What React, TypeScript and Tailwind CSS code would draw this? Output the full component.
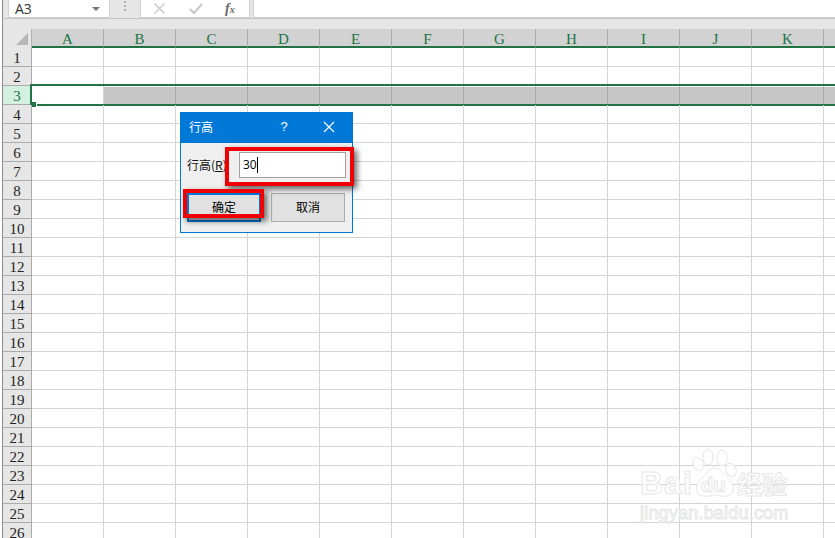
const cols = ["A","B","C","D","E","F","G","H","I","J","K",""];
const rows = Array.from({ length: 26 }, (_, i) => i + 1);
const serif = "font-['Liberation_Serif','DejaVu_Serif',serif]";
const cjk = "font-['Noto_Sans_CJK_SC','Noto_Sans',sans-serif]";

function Watermark() {
  const stroke = "[-webkit-text-stroke:1px_#e6e6e6] text-white/80 font-['Liberation_Sans',sans-serif]";
  return (
    <div className="absolute left-[640px] top-[447px] w-[160px] h-[80px]">
      <div className={`absolute left-0 top-[20px] text-[32px] leading-[32px] tracking-[1px] font-bold ${stroke}`}>Bai</div>
      <svg className="absolute left-[50px] top-0" width="50" height="56" viewBox="0 0 50 56" fill="rgba(255,255,255,0.8)" stroke="#e6e6e6" strokeWidth="1">
        <ellipse cx="8" cy="17" rx="5" ry="7" transform="rotate(-25 8 17)" />
        <ellipse cx="18" cy="10" rx="5" ry="8" />
        <ellipse cx="32" cy="11" rx="5" ry="8" />
        <ellipse cx="41" cy="23" rx="5" ry="7" transform="rotate(-20 41 23)" />
        <path d="M25 21c-6 0-8 6-13 10-7 4-8 17 1 18 5 1 8-1 12-1s7 2 12 1c9-1 8-14 1-18-5-4-7-10-13-10z" />
      </svg>
      <div className={`absolute left-[61px] top-[26px] text-[20px] leading-[24px] font-bold ${stroke}`}>du</div>
      <div className={`absolute left-[97px] top-[21px] text-[25px] leading-[30px] font-bold [-webkit-text-stroke:1px_#e6e6e6] text-white/80 ${cjk}`}>经验</div>
      <div className={`absolute left-0 top-[55px] text-[18px] leading-[22px] tracking-[0.2px] whitespace-nowrap ${stroke}`}>jingyan.baidu.com</div>
    </div>
  );
}

function Dialog() {
  return (
    <div className={`absolute left-[180px] top-[112px] w-[173px] h-[121px] bg-[#f0f0f0] border border-[#0078d7] flex flex-col ${cjk}`}>
      <div className="h-[31px] -mt-px bg-[#0078d7] flex items-center text-white text-[12px] pl-[9px] pb-[2px] shrink-0 -mx-px">
        <span className="w-[80px]">行高</span>
        <span className="w-[30px] text-center text-[13px] font-['Liberation_Sans',sans-serif]">?</span>
        <svg className="ml-[24px]" width="12" height="12" viewBox="0 0 12 12" stroke="#fff" strokeWidth="1.2" fill="none"><path d="M1 1l10 10M11 1l-10 10" /></svg>
      </div>
      <div className="flex items-center pl-[6px] mt-[9px] h-[26px]">
        <span className="w-[52px] text-[12px] text-[#111] whitespace-nowrap">行高(<span className="underline">R</span>)</span>
        <div className="w-[107px] h-[26px] bg-white border border-[#a0a0a0] flex items-center pl-[3px] text-[12px] text-black font-['Open_Sans',sans-serif]">
          30<span className="w-px h-[16px] bg-black" />
        </div>
      </div>
      <div className="flex mt-[15px] pl-[6px] gap-[10px]">
        <div className="w-[74px] h-[29px] bg-[#e1e1e1] border-2 border-[#0078d7] flex items-center justify-center pb-[2px] text-[12px] text-black">确定</div>
        <div className="w-[74px] h-[29px] bg-[#e1e1e1] border border-[#adadad] flex items-center justify-center pb-[2px] text-[12px] text-black">取消</div>
      </div>
    </div>
  );
}

export default function App() {
  return (
    <div className="relative w-[835px] h-[538px] overflow-hidden bg-white flex flex-col">
      <div className="h-[19px] shrink-0 bg-[#e6e6e6] border-b border-[#c4c4c4] ml-[2px] pl-[5px] border-l border-l-[#8c8c8c] flex">
        <div className="w-[102px] h-[18px] bg-white border-x border-b border-[#d0d0d0] flex items-center justify-between pl-[6px] pr-[9px] text-[14px] text-[#333] font-['Open_Sans',sans-serif] shrink-0">
          <span>A3</span>
          <span className="w-0 h-0 border-x-[4px] border-x-transparent border-t-[4px] border-t-[#777]" />
        </div>
        <div className="w-[30px] shrink-0 flex flex-col items-center gap-[2px] pt-px">
          <span className="w-[2px] h-[2px] bg-[#b0b0b0]" />
          <span className="w-[2px] h-[2px] bg-[#b0b0b0]" />
          <span className="w-[2px] h-[2px] bg-[#b0b0b0]" />
        </div>
        <div className="w-[110px] h-[18px] bg-white border-x border-b border-[#d0d0d0] flex items-center shrink-0 pl-[13px]">
          <svg width="11" height="11" viewBox="0 0 11 11" fill="none" stroke="#c8c8c8" strokeWidth="1.4"><path d="M0.5 0.5l10 10M10.5 0.5l-10 10" /></svg>
          <svg className="ml-[24px]" width="14" height="12" viewBox="0 0 14 12" fill="none" stroke="#c8c8c8" strokeWidth="2"><path d="M1 6l4 4 8-9" /></svg>
          <span className="ml-[22px] text-[14px] italic font-bold text-[#666] font-['Liberation_Serif',serif] leading-none">f<span className="text-[10px]">x</span></span>
        </div>
        <div className="ml-[3px] flex-1 h-[18px] bg-white border-l border-b border-[#d0d0d0]" />
      </div>
      <div className="h-[10px] shrink-0 bg-[#e6e6e6] ml-[2px] border-l border-[#8c8c8c]" />
      <div className="flex flex-col flex-1 ml-[2px] border-l border-[#8c8c8c] min-h-0">
        <div className="h-[19px] flex shrink-0">
          <div className="w-[29px] bg-[#e6e6e6] relative shrink-0 border-r border-[#b4b4b4]">
            <span className="absolute right-[3px] bottom-[3px] w-0 h-0 border-l-[12px] border-l-transparent border-b-[12px] border-b-[#b6b6b6]" />
          </div>
          {cols.map((c, i) => (
            <div key={i} className={`w-[72px] shrink-0 bg-[#d2d2d2] border-r border-[#ababab] border-b-2 border-b-[#217346] text-center text-[#217346] text-[15px] leading-[20px] ${serif}`}>{c}</div>
          ))}
        </div>
        {rows.map((r) => (
          <div key={r} className="h-[19px] flex shrink-0 relative">
            <div className={`w-[29px] shrink-0 border-r border-b border-b-[#ababab] border-r-[#ababab] text-center text-[15px] leading-[20px] ${serif} ${r === 3 ? "bg-[#d3f0e0] text-[#217346]" : "bg-[#e6e6e6] text-[#222]"}`}>{r}</div>
            {cols.map((c, i) => (
              <div key={i} className={`w-[72px] shrink-0 border-r border-b ${r === 3 && i > 0 ? "bg-[#c6c6c6] border-t border-t-white border-r-[#a8a8a8] border-b-[#c6c6c6]" : "border-[#d4d4d4]"}`} />
            ))}
            {r === 3 && (
              <>
                <div className="absolute left-[27px] -top-[2px] w-[810px] h-[22px] border-y-2 border-l-2 border-[#217346] pointer-events-none" />
                <div className="absolute left-[28px] top-[16px] w-[6px] h-[6px] bg-[#217346] border-r border-b border-white" />
              </>
            )}
          </div>
        ))}
      </div>
      <Watermark />
      <Dialog />
      <div className="absolute left-[225px] top-[147px] w-[129px] h-[39px] border-4 border-[#f00000] shadow-[3px_3px_6px_rgba(0,0,0,0.6)]" />
      <div className="absolute left-[183px] top-[189px] w-[81px] h-[29px] border-4 border-[#f00000] shadow-[3px_3px_6px_rgba(0,0,0,0.6)]" />
    </div>
  );
}
